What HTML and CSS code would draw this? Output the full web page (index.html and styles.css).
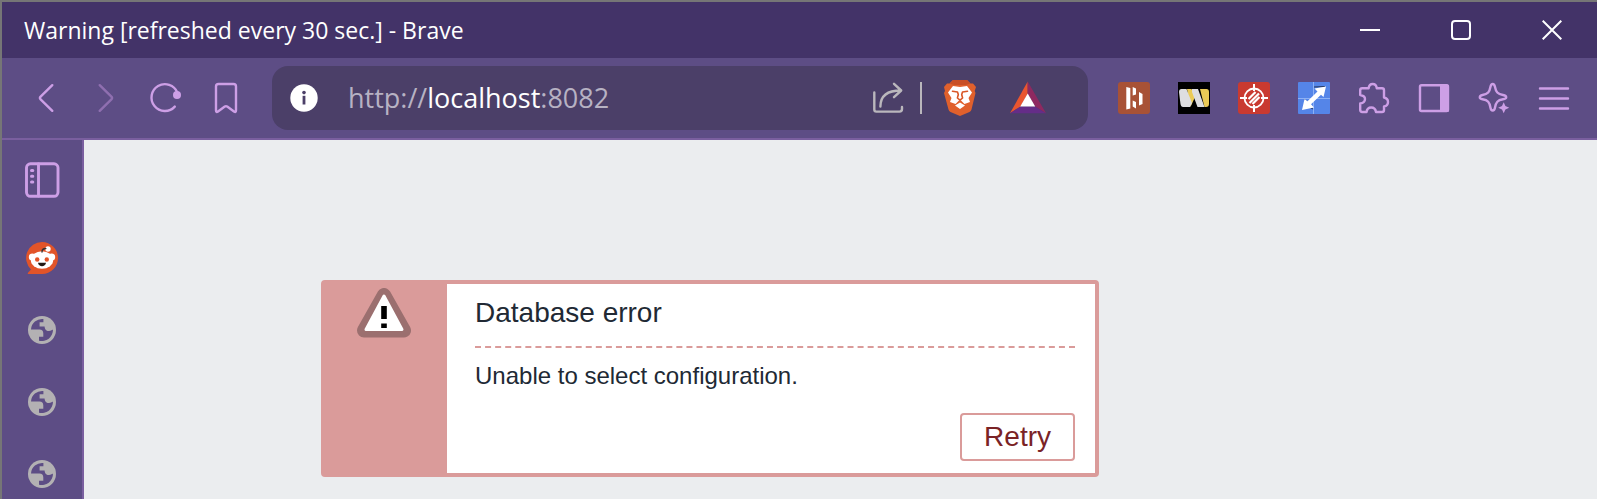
FILE: index.html
```html
<!DOCTYPE html>
<html lang="en">
<head>
<meta charset="utf-8">
<meta name="viewport" content="width=device-width, initial-scale=1">
<title>Warning [refreshed every 30 sec.]</title>
<link rel="stylesheet" href="styles.css">
</head>
<body class="window">
<svg class="defs" aria-hidden="true">
  <symbol id="globe" viewBox="0 0 36 36">
    <circle cx="18" cy="18" r="14" fill="#b3b1b3"/>
    <path fill="#5d4d85" d="M7 17.6A11.2 11.2 0 0 1 19.4 7V10.3H15.6V14.4H20.6C20.8 18 23 19 25 19C27 19 28 18 29 17.6A11.2 11.2 0 0 1 15 28.7V24.7H19.3V21.5C19.3 19 18 17.6 15.5 17.6Z"/>
  </symbol>
</svg>

<header class="titlebar">
  <div class="window-title">Warning [refreshed every 30 sec.] - Brave</div>
  <div class="window-controls">
    <button class="control" aria-label="Minimize"><svg width="20" height="20"><path d="M0 10H20"/></svg></button>
    <button class="control" aria-label="Maximize"><svg width="20" height="20"><rect x="1" y="1" width="18" height="18" rx="3"/></svg></button>
    <button class="control" aria-label="Close"><svg width="20" height="20"><path d="M.7 .7L19.3 19.3M19.3 .7L.7 19.3"/></svg></button>
  </div>
</header>

<nav class="toolbar" aria-label="Browser toolbar">
  <div class="tools">
    <button class="tool" aria-label="Back"><svg class="icon"><path d="M24.3 5.2L12.6 16.6Q11.3 18 12.6 19.4L24.3 30.8"/></svg></button>
    <button class="tool" aria-label="Forward" disabled><svg class="icon"><path d="M11.7 5.2L23.4 16.6Q24.7 18 23.4 19.4L11.7 30.8"/></svg></button>
    <button class="tool" aria-label="Reload"><svg class="icon"><path d="M26.8 26.6A13.4 13.4 0 1 1 29.3 12.5"/><circle class="solid" cx="29" cy="15" r="4"/></svg></button>
    <button class="tool" aria-label="Bookmark"><svg class="icon"><path d="M10.5 4H25.5Q28 4 28 6.5V30.5Q28 32.8 26 31.4L19.2 26.6Q18 25.8 16.8 26.6L10 31.4Q8 32.8 8 30.5V6.5Q8 4 10.5 4Z"/></svg></button>
  </div>

  <div class="address">
    <button class="site-info" aria-label="Site information"><svg width="28" height="28"><circle cx="14" cy="14" r="13.7" fill="#fff"/><circle cx="14" cy="8.6" r="1.8" fill="#4b3f68"/><path d="M14 11.8V20.5" stroke="#4b3f68" stroke-width="2.8"/></svg></button>
    <div class="url" role="textbox" contenteditable="true" spellcheck="false" aria-label="Address">http://<span class="host">localhost</span>:8082</div>
    <button class="share" aria-label="Share"><svg class="icon"><path d="M4.3 12.5V29.5Q4.3 31.6 6.4 31.6H29.5Q32 31.6 32 29V27M10.4 26.5C10.4 15.5 17 10.5 31 10.5M24 3.8L31.2 10.5L24 17.2"/></svg></button>
    <span class="divider"></span>
    <button class="shields" aria-label="Brave Shields"><svg class="icon">
      <path class="fill" fill="#e0602c" d="M11 0H25L28.5 3.5H31L34 7L32.7 11L33.5 13L29.5 29.500Q29 31 27.500 32L18 36L8.500 32Q7 31 6.500 29.500L2 13L3 11L2 7L5 3.5H7.5Z"/>
      <path class="fill" fill="#c94f24" d="M11 0H25L28.5 3.5L24 5H12L7.500 3.5Z"/>
      <path class="fill" fill="#fff" d="M11 6L18 7L25 6L30 12.500L26.500 18L28 22L22.500 24L19 20.500H17L13.500 24L8 22L9.500 18L6 12.500ZM18 22.500L23 25.500L18 29L13 25.500Z"/>
      <path d="M10.500 11.300L15.500 12L16.300 14.500L15.400 18L18 20.200L20.600 18L19.700 14.500L20.500 12L25.500 11.300" stroke="#d95727" stroke-width="1.600"/>
    </svg></button>
    <button class="rewards" aria-label="Brave Rewards"><svg class="icon">
      <path class="fill" fill="#e9552f" d="M17.700 1.500V14L10.500 26.500L0 33.300Z"/>
      <path class="fill" fill="#8e2960" d="M17.700 1.500L36 33.300L25 26.500L17.700 14Z"/>
      <path class="fill" fill="#652d88" d="M0 33.300L10.500 26.500H25L36 33.300Z"/>
      <path class="fill" fill="#fff" d="M17.700 13.500L25.200 26.500H10.200Z"/>
    </svg></button>
  </div>

  <div class="tools">
    <button class="tool" aria-label="Highlighter extension"><svg width="32" height="32">
      <rect width="32" height="32" rx="3" fill="#a85236"/>
      <path fill="#fff" d="M8.300 5L12.300 6V26.500L8.300 27.500ZM14.700 5L18 6.500V12.500L14.700 13.500ZM14.700 18.500L18 20V26.500L14.700 24.500ZM21 10L24.500 12V22L21 23.500Z"/>
    </svg></button>
    <button class="tool" aria-label="W extension"><svg width="32" height="32">
      <rect width="32" height="32"/>
      <path fill="#ebcb57" d="M9 7H13.500L17.500 14L12.500 25ZM22 7H28.500Q31 7 31 10V22Q31 25 28 25H26.500Z"/>
      <path fill="#dedee0" d="M1 10Q1 7 3.500 7H8.500L14 21L12 25H5Q3 25 2.500 22ZM14 7H20L26.500 25H19.500L14 10Z"/>
    </svg></button>
    <button class="tool" aria-label="Target extension"><svg width="32" height="32">
      <rect width="32" height="32" rx="3" fill="#c93a30"/>
      <g fill="none" stroke="#fff"><circle cx="16" cy="16" r="9.500" stroke-width="1.800"/><path stroke-width="2" d="M16 2V9M16 23V30M2 16H9M23 16H30"/><path stroke-width="2.200" d="M10.500 17L17.500 10M11.500 21L21 11.500M14.500 22L21.500 15"/></g>
    </svg></button>
    <button class="tool" aria-label="Resize extension"><svg width="32" height="32">
      <rect width="32" height="32" rx="1" fill="#5585e8"/>
      <path d="M15.500 0V32M0 16.500H32" stroke="#8db1f5"/>
      <path d="M16 5L27 4.500M6 17.500L10 20M12 25.500L15 27" fill="none" stroke="#25365c"/>
      <path fill="#fff" d="M28 4.500L25.500 15L23 12.800L13 22.300L16 25.500L4 28L6.500 17L9.500 19.300L19.500 9.500L16.500 6.500Z"/>
    </svg></button>
    <button class="tool" aria-label="Extensions"><svg class="icon"><path d="M6.200 8.200H12.600C13 5.500 14 4 16.700 4S20.400 5.500 20.800 8.200H26Q28 8.200 28 10.200V17.500C30.500 18 32 19.500 32 22S30.500 26 28 26.500V30Q28 32 26 32H20C19.500 29 18 27.500 15.200 27.500S11 29 10.500 32H6.200Q4.200 32 4.200 30V23.500C7.500 23 9 21.500 9 19S7.500 15.500 4.200 15V10.200Q4.200 8.200 6.200 8.200Z"/></svg></button>
    <button class="tool" aria-label="Side panel"><svg class="icon"><rect x="4" y="5.300" width="28" height="25.700" rx="1.500"/><path class="solid" d="M24 4.500H31.500Q33 4.500 33 6V30.500Q33 32 31.500 32H24Z"/></svg></button>
    <button class="tool" aria-label="Assistant"><svg class="icon"><path d="M16.700 4C18.200 4 18.700 5.500 19 7C20 12 21.500 14 27 15C29 15.400 30.200 16 30.200 17.300S29 19 27 19.300C21.500 20.300 20 22 19 27.500C18.700 29.300 18.200 30.500 16.700 30.500S14.700 29.300 14.400 27.500C13.500 22 12 20.300 6.500 19.300C4.500 19 3.800 18.600 3.800 17.300S4.500 15.400 6.500 15C12 14 13.500 12 14.400 7C14.700 5.500 15.200 4 16.700 4Z"/><path class="solid" d="M27.700 22.300L29.400 26L33.200 27.800L29.400 29.600L27.700 33.300L26 29.600L22.200 27.800L26 26Z"/></svg></button>
    <button class="tool" aria-label="Menu"><svg class="icon"><path d="M4 8.500H32M4 18.500H32M4 28.500H32"/></svg></button>
  </div>
</nav>

<div class="workspace">
  <aside class="sidebar" aria-label="Sidebar">
    <button class="side-item side-toggle" aria-label="Toggle sidebar"><svg class="icon"><g stroke-width="2.900"><rect x="2.500" y="1.800" width="31.500" height="32.500" rx="4"/><path d="M14.500 2V34"/></g><path stroke-width="3" d="M7.500 8.400H8.800M7.500 14.300H8.800M7.500 20H8.800"/></svg></button>
    <button class="side-item" aria-label="Reddit"><svg class="icon">
      <path class="fill" fill="#e25429" d="M18 2A16 16 0 1 1 18 34H4.500Q3 34 4.200 32.500L7 29.500A16 16 0 0 1 18 2Z"/>
      <g class="fill" fill="#fff"><circle cx="8.300" cy="17" r="3.500"/><circle cx="27.700" cy="17" r="3.500"/><ellipse cx="18" cy="20" rx="11.200" ry="8.800"/><circle cx="24" cy="9" r="2.700"/></g>
      <path d="M18 12C18 9.500 19.500 8.500 21.800 8.500" stroke="#333" stroke-width="1.400"/>
      <g class="fill" fill="#e25429"><circle cx="13.200" cy="19.500" r="2.200"/><circle cx="22.800" cy="19.500" r="2.200"/></g>
      <path class="fill" fill="#221915" d="M14 22.800H22C21.500 27.300 14.500 27.300 14 22.800Z"/>
    </svg></button>
    <button class="side-item" aria-label="Website 1"><svg class="icon"><use href="#globe"/></svg></button>
    <button class="side-item" aria-label="Website 2"><svg class="icon"><use href="#globe"/></svg></button>
    <button class="side-item" aria-label="Website 3"><svg class="icon"><use href="#globe"/></svg></button>
  </aside>

  <main class="page">
    <section class="alert" role="alert">
      <div class="alert-mark">
        <svg width="54" height="50" viewBox="0 0 54 50"><path d="M27 7L47 42.500H7Z" fill="#9b6f6f" stroke="#9b6f6f" stroke-width="14" stroke-linejoin="round"/><path d="M27 8L45 41.500H9Z" fill="#fff" stroke="#fff" stroke-width="3" stroke-linejoin="round"/><path d="M24.200 18H29.800V31H24.200ZM24.200 35.500H29.800V40H24.200Z"/></svg>
      </div>
      <div class="alert-body">
        <h1 class="alert-title">Database error</h1>
        <p class="alert-text">Unable to select configuration.</p>
        <button class="retry">Retry</button>
      </div>
    </section>
  </main>
</div>
</body>
</html>
```
FILE: styles.css
```css
* {
  box-sizing: border-box;
}

.window {
  display: flex;
  flex-direction: column;
  height: 100vh;
  margin: 0;
  overflow: hidden;
  border-top: 2px solid #767676;
  border-left: 2px solid #767676;
  background: #5d4d85;
  font-family: "Open Sans", "Noto Sans", sans-serif;
}

.defs {
  display: none;
}

button {
  display: flex;
  align-items: center;
  justify-content: center;
  flex: none;
  margin: 0;
  padding: 0;
  border: 0;
  background: none;
  color: inherit;
}

.icon {
  width: 36px;
  height: 36px;
  fill: none;
  stroke: currentColor;
  stroke-width: 2.4;
  stroke-linecap: round;
  stroke-linejoin: round;
}

.icon .solid {
  fill: currentColor;
  stroke: none;
}

.icon .fill,
.icon use {
  stroke: none;
}

.titlebar {
  display: flex;
  flex: none;
  justify-content: space-between;
  height: 56px;
  padding-left: 22px;
  background: #433368;
  color: #fff;
}

.window-title {
  font-size: 23px;
  line-height: 56px;
  white-space: nowrap;
}

.window-controls {
  display: flex;
}

.control {
  width: 91px;
}

.control svg {
  fill: none;
  stroke: #fff;
  stroke-width: 2;
}

.toolbar {
  display: flex;
  flex: none;
  align-items: center;
  gap: 16px;
  height: 82px;
  padding: 0 13px 0 14px;
  border-bottom: 2px solid #7a5f9f;
  color: #cd9fe6;
}

.tools {
  display: flex;
  flex: none;
}

.tool {
  width: 60px;
  height: 60px;
}

.tool:disabled {
  color: #8f6fb0;
}

.address {
  display: flex;
  flex: 1;
  align-items: center;
  min-width: 0;
  height: 64px;
  padding: 0 42px 0 18px;
  border-radius: 16px;
  background: #4b3f68;
  color: #bab7bc;
}

.url {
  flex: 1;
  min-width: 0;
  margin-left: 30px;
  overflow: hidden;
  color: #b7b2c3;
  font-size: 27px;
  line-height: 40px;
  white-space: nowrap;
}

.host {
  color: #fff;
}

.divider {
  width: 2px;
  height: 32px;
  margin: 0 20px 0 14px;
  background: #bab7bc;
}

.rewards {
  margin-left: 32px;
}

.workspace {
  display: flex;
  flex: 1;
  min-height: 0;
}

.sidebar {
  flex: none;
  width: 82px;
  padding-top: 4px;
  overflow: hidden;
  border-right: 2px solid #7a5f9f;
  color: #cd9fe6;
}

.side-item {
  width: 100%;
  height: 72px;
}

.side-toggle {
  margin-bottom: 6px;
}

.page {
  flex: 1;
  padding: 140px 24px 0 237px;
  overflow: hidden;
  background: #ebedef;
  font-family: "Liberation Sans", Arial, sans-serif;
}

.alert {
  display: flex;
  max-width: 778px;
  border: 4px solid #da9b9a;
  border-radius: 4px;
  background: #da9b9a;
}

.alert-mark {
  display: flex;
  flex: none;
  justify-content: center;
  width: 122px;
  padding: 4px 4px 0 0;
}

.alert-body {
  flex: 1;
  padding: 13px 20px 12px 28px;
  background: #fff;
  color: #212934;
}

.alert-title {
  margin: 0;
  padding-bottom: 17px;
  border-bottom: 2px dashed #da9b9a;
  font-size: 28px;
  font-weight: 400;
  line-height: 32px;
}

.alert-text {
  margin: 14px 0 23px;
  font-size: 24px;
  line-height: 28px;
}

.retry {
  height: 48px;
  margin-left: auto;
  padding: 0 22px;
  border: 2px solid #da9b9a;
  border-radius: 4px;
  background: #fff;
  color: #7a2326;
  font-family: inherit;
  font-size: 28px;
}
```
